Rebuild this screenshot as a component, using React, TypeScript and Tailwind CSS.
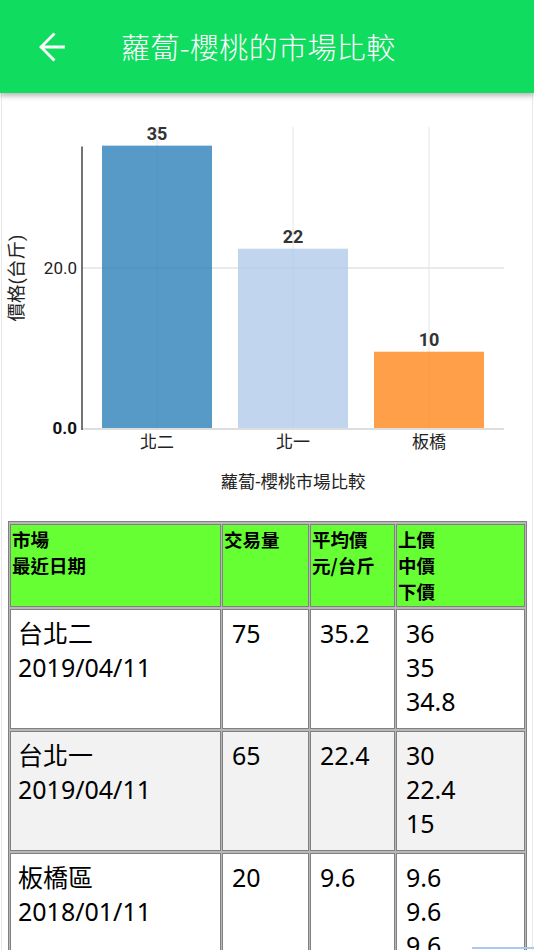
import React from "react";

const bars = [
  { label: "北二", value: 35.2, text: "35", x: 102, color: "#1f77b4" },
  { label: "北一", value: 22.4, text: "22", x: 238, color: "#aec7e8" },
  { label: "板橋", value: 9.6, text: "10", x: 374, color: "#ff7f0e" },
];

const rows = [
  { name: "台北二", date: "2019/04/11", vol: "75", avg: "35.2", prices: ["36", "35", "34.8"], bg: "bg-white" },
  { name: "台北一", date: "2019/04/11", vol: "65", avg: "22.4", prices: ["30", "22.4", "15"], bg: "bg-[#f2f2f2]" },
  { name: "板橋區", date: "2018/01/11", vol: "20", avg: "9.6", prices: ["9.6", "9.6", "9.6"], bg: "bg-white" },
];

const chartFont = "Roboto, 'Noto Sans CJK TC', sans-serif";

function Chart() {
  const y0 = 429;
  const k = 8.05;
  return (
    <svg width={530} height={428} viewBox="2 93 530 428" className="block">
      {[157, 293, 429].map((x) => (
        <line key={x} x1={x} x2={x} y1={127} y2={y0} stroke="#e6e6e6" strokeWidth={1} />
      ))}
      <line x1={82} x2={504} y1={268} y2={268} stroke="#e3e3e3" strokeWidth={1.5} />
      {bars.map((b) => (
        <rect key={b.label} x={b.x} y={y0 - b.value * k} width={110} height={b.value * k} fill={b.color} fillOpacity={0.75} />
      ))}
      <line x1={82} x2={504} y1={y0} y2={y0} stroke="#dddddd" strokeWidth={2} />
      <line x1={82} x2={82} y1={146.5} y2={y0 + 1} stroke="#444444" strokeWidth={1.5} />
      {bars.map((b) => (
        <text
          key={b.text}
          x={b.x + 55}
          y={y0 - b.value * k - 6}
          textAnchor="middle"
          fontFamily={chartFont}
          fontWeight={700}
          fontSize={18}
          fill="#333333"
        >
          {b.text}
        </text>
      ))}
      <text x={77} y={274} textAnchor="end" fontFamily={chartFont} fontSize={17} fill="#222222">
        20.0
      </text>
      <text x={77} y={434} textAnchor="end" fontFamily={chartFont} fontSize={17} fontWeight={700} fill="#111111">
        0.0
      </text>
      {bars.map((b) => (
        <text
          key={b.label + "x"}
          x={b.x + 55}
          y={448}
          textAnchor="middle"
          fontFamily={chartFont}
          fontSize={17}
          fill="#222222"
        >
          {b.label}
        </text>
      ))}
      <text
        x={0}
        y={0}
        transform="translate(23 278) rotate(-90)"
        textAnchor="middle"
        fontFamily={chartFont}
        fontSize={18.5}
        fill="#222222"
      >
        價格(台斤)
      </text>
      <text x={293} y={488} textAnchor="middle" fontFamily={chartFont} fontSize={17.5} fill="#222222">
        蘿蔔-櫻桃市場比較
      </text>
    </svg>
  );
}

export default function App() {
  return (
    <div className="w-[534px] h-[950px] overflow-hidden bg-white relative">
      <header className="relative z-10 flex h-[93px] items-center bg-[#10dc60] shadow-[0_3px_5px_rgba(0,0,0,0.28)]">
        <svg width={36} height={36} viewBox="32 29 36 36" className="ml-[32px] shrink-0">
          <path d="M63.5 47H41.5 M53.5 34.5L41 47L53.5 59.5" stroke="#ffffff" strokeWidth={2.8} fill="none" strokeLinecap="square" />
        </svg>
        <h1
          className="ml-[53px] text-[29px] font-light tracking-[0.4px] text-white leading-none"
          style={{ fontFamily: "'Noto Sans CJK TC', sans-serif" }}
        >
          蘿蔔-櫻桃的市場比較
        </h1>
      </header>
      <div className="mx-[1px] border-x border-[#e8e8e8] h-[857px]">
        <Chart />
        <table
          className="ml-[6px] w-[519px] table-fixed border-separate border-spacing-x-[1px] border-spacing-y-[2px] border border-[#808080] bg-[#b8b8b8] text-black"
          style={{ fontFamily: "'Noto Sans', 'Noto Sans CJK TC', sans-serif" }}
        >
          <thead>
            <tr>
              {[
                { w: "w-[211px]", lines: ["市場", "最近日期"] },
                { w: "w-[87px]", lines: ["交易量"] },
                { w: "w-[85px]", lines: ["平均價", "元/台斤"] },
                { w: "w-[129px]", lines: ["上價", "中價", "下價"] },
              ].map((c, i) => (
                <th
                  key={i}
                  className={`${c.w} border border-[#808080] bg-[#66ff33] p-0 align-top text-left`}
                >
                  <div
                    className="h-[81px] pt-[1px] pl-[1px] text-[18.5px] font-bold leading-[26px]"
                    style={{ fontFamily: "'Noto Sans CJK TC', sans-serif" }}
                  >
                    {c.lines.map((l) => (
                      <div key={l}>{l}</div>
                    ))}
                  </div>
                </th>
              ))}
            </tr>
          </thead>
          <tbody>
            {rows.map((r) => (
              <tr key={r.name}>
                <td className={`border border-[#808080] p-0 align-top ${r.bg}`}>
                  <div className="h-[118px] pt-[6px] pl-[7px] text-[25px] leading-[34px]">
                    <div>{r.name}</div>
                    <div>{r.date}</div>
                  </div>
                </td>
                <td className={`border border-[#808080] p-0 align-top ${r.bg}`}>
                  <div className="h-[118px] pt-[6px] pl-[9px] text-[25px] leading-[34px]">{r.vol}</div>
                </td>
                <td className={`border border-[#808080] p-0 align-top ${r.bg}`}>
                  <div className="h-[118px] pt-[6px] pl-[9px] text-[25px] leading-[34px]">{r.avg}</div>
                </td>
                <td className={`border border-[#808080] p-0 align-top ${r.bg}`}>
                  <div className="h-[118px] pt-[6px] pl-[9px] text-[25px] leading-[34px]">
                    {r.prices.map((p, i) => (
                      <div key={i}>{p}</div>
                    ))}
                  </div>
                </td>
              </tr>
            ))}
          </tbody>
        </table>
      </div>
      <div className="absolute bottom-[1px] right-0 h-[2px] w-[62px] bg-[#a9c9ee]" />
    </div>
  );
}
